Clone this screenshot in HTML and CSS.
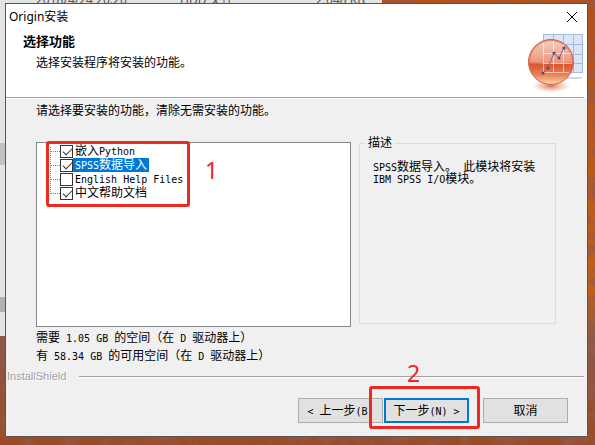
FILE: index.html
```html
<!DOCTYPE html>
<html lang="zh-CN">
<head>
  <meta charset="utf-8">
  <title>Origin安装</title>
  <link rel="stylesheet" href="styles.css">
</head>
<body>
  <svg class="wallpaper" aria-hidden="true">
    <filter id="rust" x="0" y="0" width="100%" height="100%">
      <feTurbulence type="fractalNoise" baseFrequency="0.05 0.09" numOctaves="4" seed="8"/>
      <feColorMatrix values="0 0 0 0 0.3  0 0 0 0 0.1  0 0 0 0 0.06  2.4 0 0 0 -1.05"/>
    </filter>
    <rect width="100%" height="100%" filter="url(#rust)"/>
  </svg>

  <div class="explorer">
    <span class="file-date">2018/4/24 20:20</span>
    <span class="file-type">HDD 文件</span>
    <span class="file-size">2,048 KB</span>
    <div class="explorer-row"></div>
    <div class="explorer-row low"></div>
  </div>

  <main class="dialog">
    <header class="header">
      <div class="titlebar">
        <span class="title">Origin安装</span>
        <button class="close-btn" aria-label="关闭">
          <svg width="12" height="12" viewBox="0 0 12 12" fill="none" stroke="#000">
            <path d="M1 1l10 10M11 1L1 11"/>
          </svg>
        </button>
      </div>
      <div class="banner">
        <div class="banner-text">
          <h1>选择功能</h1>
          <p>选择安装程序将安装的功能。</p>
        </div>
        <svg class="logo" width="58" height="62" viewBox="0 0 58 62">
          <defs>
            <linearGradient id="ball" x1="0" y1="0" x2="0" y2="1">
              <stop offset="0" stop-color="#e58b74"/>
              <stop offset="0.5" stop-color="#ec8465"/>
              <stop offset="0.56" stop-color="#dc5432"/>
              <stop offset="0.78" stop-color="#ea8155"/>
              <stop offset="1" stop-color="#fbd9a4"/>
            </linearGradient>
            <linearGradient id="shine" x1="0" y1="0" x2="0" y2="1">
              <stop offset="0" stop-color="#fff" stop-opacity="0.55"/>
              <stop offset="1" stop-color="#fff" stop-opacity="0.12"/>
            </linearGradient>
            <radialGradient id="shadow">
              <stop offset="0" stop-color="#c65b30" stop-opacity="0.85"/>
              <stop offset="1" stop-color="#f3b58f" stop-opacity="0"/>
            </radialGradient>
          </defs>
          <rect x="17" y="3" width="40" height="39" fill="#dbe5f5"/>
          <path d="M17.500 3v39M27.500 3v39M37.500 3v39M47.500 3v39M56.500 3v39M17 3.500h40M17 13.500h40M17 23.500h40M17 32.500h40M17 41.500h40" stroke="#a5bce0" fill="none"/>
          <path d="M38 47h18" stroke="#cfdcea" stroke-width="2"/>
          <ellipse cx="25" cy="55" rx="20" ry="7" fill="url(#shadow)"/>
          <circle cx="25" cy="31" r="22.500" fill="url(#ball)" stroke="#c96450"/>
          <path d="M4 31a21 21 0 0 1 42 0q-22 4-42 0z" fill="url(#shine)"/>
          <path d="M17.500 12v29M27.500 10v31M37.500 13v28M17 22.500h28M17 32.500h29M17 41.500h26" stroke="#fff" stroke-opacity="0.55" fill="none"/>
          <path d="M17 42l5-5 6-15 5 5 5-10" stroke="#74669a" fill="none"/>
          <g fill="#37529b">
            <circle cx="17" cy="42" r="1.600"/>
            <circle cx="22" cy="37" r="1.600"/>
            <circle cx="28" cy="22" r="1.600"/>
            <circle cx="33" cy="27" r="1.600"/>
            <circle cx="38" cy="17" r="1.600"/>
          </g>
        </svg>
      </div>
    </header>
    <hr class="rule">

    <section class="content">
      <p class="hint">请选择要安装的功能，清除无需安装的功能。</p>
      <div class="columns">
        <div class="feature-list">
          <ul>
            <li><input type="checkbox" id="f-python" checked><label for="f-python">嵌入<span class="latin">Python</span></label></li>
            <li><input type="checkbox" id="f-spss" checked><label for="f-spss" class="selected"><span class="latin">SPSS</span>数据导入</label></li>
            <li><input type="checkbox" id="f-help"><label for="f-help"><span class="latin">English Help Files</span></label></li>
            <li><input type="checkbox" id="f-docs" checked><label for="f-docs">中文帮助文档</label></li>
          </ul>
          <div class="mark mark-list"></div>
          <span class="mark-number number-one">1</span>
        </div>
        <fieldset class="description">
          <legend>描述</legend>
          <p><span class="latin">SPSS</span>数据导入。<span class="latin"> </span>此模块将安装<br><span class="latin">IBM SPSS I/O</span>模块。</p>
        </fieldset>
      </div>
      <div class="space">
        <p>需要<span class="latin"> 1.05 GB </span>的空间（在<span class="latin"> D </span>驱动器上）</p>
        <p>有<span class="latin"> 58.34 GB </span>的可用空间（在<span class="latin"> D </span>驱动器上）</p>
      </div>
    </section>

    <div class="brand"><span>InstallShield</span><hr class="rule"></div>

    <footer class="actions">
      <button class="btn"><span class="latin">&lt; </span>上一步<span class="latin">(B)</span></button>
      <div class="next">
        <button class="btn btn-default">下一步<span class="latin">(N) &gt;</span></button>
        <div class="mark mark-next"></div>
        <span class="mark-number number-two">2</span>
      </div>
      <button class="btn btn-cancel">取消</button>
    </footer>
  </main>
</body>
</html>
```
FILE: styles.css
```css
* {
  box-sizing: border-box;
}

body {
  position: relative;
  display: flex;
  min-height: 100vh;
  margin: 0;
  padding: 3px 7px 8px 5px;
  overflow: hidden;
  background: linear-gradient(#b3501a, #c46016 65%, #8b5a4a 76%, #9c4a22);
  font-family: "Liberation Sans", "Noto Sans CJK SC", sans-serif;
  font-size: 12px;
  line-height: 14px;
  color: #000;
}

h1, p, ul {
  margin: 0;
  padding: 0;
}

button {
  font: inherit;
  color: inherit;
}

.latin {
  font-family: "DejaVu Sans Mono", monospace;
  font-size: 10px;
  line-height: 10px;
  white-space: pre;
}

/* Desktop behind the dialog */
.wallpaper {
  position: absolute;
  top: 0;
  left: 0;
  width: 100%;
  height: 100%;
}

.explorer {
  position: absolute;
  top: 0;
  left: 0;
  width: 382px;
  height: 336px;
  background: #e3e3e3;
  color: #555;
  font-family: "Noto Sans", "Noto Sans CJK SC", sans-serif;
}

.explorer span {
  position: absolute;
  top: -7px;
}

.file-date {
  left: 36px;
}

.file-type {
  left: 180px;
}

.file-size {
  right: 17px;
}

.explorer-row {
  position: absolute;
  top: 143px;
  width: 100%;
  height: 22px;
  background: #c2c2c2;
}

.explorer-row.low {
  top: 297px;
  height: 15px;
  background: #b0b0b0;
}

/* Dialog */
.dialog {
  position: relative;
  display: flex;
  flex: 1;
  flex-direction: column;
  border: 1px solid #555;
  background: #f0f0f0;
}

.header {
  background: #fff;
}

.titlebar {
  display: flex;
  justify-content: space-between;
  align-items: center;
  height: 25px;
  padding: 0 9px 0 3px;
  font-family: "Noto Sans", "Noto Sans CJK SC", sans-serif;
}

.close-btn {
  display: flex;
  padding: 0;
  border: none;
  background: none;
}

.banner {
  display: flex;
  justify-content: space-between;
  height: 68px;
  padding: 2px 3px 0 17px;
}

.banner-text {
  padding-top: 4px;
}

.banner h1 {
  margin-bottom: 7px;
  font-size: 13px;
  line-height: 14px;
}

.banner p {
  padding-left: 13px;
}

.rule {
  flex: 1;
  height: 2px;
  margin: 0 3px 0 0;
  border: none;
  border-top: 1px solid #a0a0a0;
  border-bottom: 1px solid #fff;
}

.dialog > .rule {
  flex: none;
}

.content {
  display: flex;
  flex: 1;
  flex-direction: column;
  padding: 5px 31px 0 30px;
}

.hint {
  margin-bottom: 19px;
}

.columns {
  display: grid;
  flex: 1;
  grid-template-columns: 315fr 197fr;
  gap: 8px;
}

.feature-list {
  position: relative;
  margin-top: 5px;
  border: 1px solid #828790;
  background: #fff;
}

.feature-list ul {
  position: relative;
  margin-left: 13px;
  padding-top: 1px;
  list-style: none;
}

.feature-list ul::before {
  content: "";
  position: absolute;
  top: 4px;
  bottom: 6px;
  left: 0;
  border-left: 1px dotted #808080;
}

.feature-list li {
  display: flex;
  align-items: center;
  height: 14px;
}

.feature-list li::before {
  content: "";
  width: 10px;
  border-top: 1px dotted #808080;
}

.feature-list input {
  position: relative;
  flex: none;
  width: 13px;
  height: 13px;
  margin: 0;
  appearance: none;
  border: 1px solid #333;
  background: #fff;
}

.feature-list input:checked::after {
  content: "";
  position: absolute;
  top: 0;
  left: 4px;
  width: 4px;
  height: 8px;
  border: solid #333;
  border-width: 0 1px 1px 0;
  transform: rotate(45deg);
}

.feature-list label {
  height: 14px;
  padding: 0 2px;
  white-space: nowrap;
}

.feature-list .selected {
  background: #0078d7;
  color: #fff;
}

.description {
  min-width: 0;
  margin: 0 0 3px;
  padding: 12px 8px 0 13px;
  border: 1px solid #dcdcdc;
}

.description legend {
  margin-left: -7px;
  padding: 0 2px;
  line-height: 12px;
}

.description p {
  line-height: 12px;
  white-space: nowrap;
}

.space {
  padding-top: 2px;
  line-height: 18px;
}

.brand {
  display: flex;
  align-items: center;
  gap: 13px;
  height: 16px;
  margin-top: 3px;
  padding-left: 1px;
  color: #a0a0a0;
  font-family: "Liberation Sans", sans-serif;
  font-size: 11px;
  text-shadow: 1px 1px #fff;
}

.brand .rule {
  margin-top: 2px;
}

.actions {
  display: flex;
  justify-content: flex-end;
  padding: 14px 19px 13px 0;
}

.btn {
  width: 85px;
  height: 25px;
  padding: 0;
  border: 1px solid #adadad;
  background: #e1e1e1;
  white-space: nowrap;
}

.btn-default {
  border: 2px solid #0078d7;
}

.btn-cancel {
  margin-left: 14px;
}

.next {
  position: relative;
  margin-left: 1px;
}

/* Red step markers */
.mark {
  position: absolute;
  border: 3px solid #ed2a22;
  border-radius: 3px;
  pointer-events: none;
}

.mark-list {
  top: -2px;
  left: 9px;
  width: 144px;
  height: 66px;
}

.mark-next {
  top: -12px;
  left: -15px;
  width: 111px;
  height: 43px;
}

.mark-number {
  position: absolute;
  color: #ed2a22;
  font-family: "Noto Sans", sans-serif;
  font-size: 23px;
  line-height: 24px;
}

.number-one {
  top: 15px;
  left: 168px;
}

.number-two {
  top: -37px;
  left: 23px;
}
```
